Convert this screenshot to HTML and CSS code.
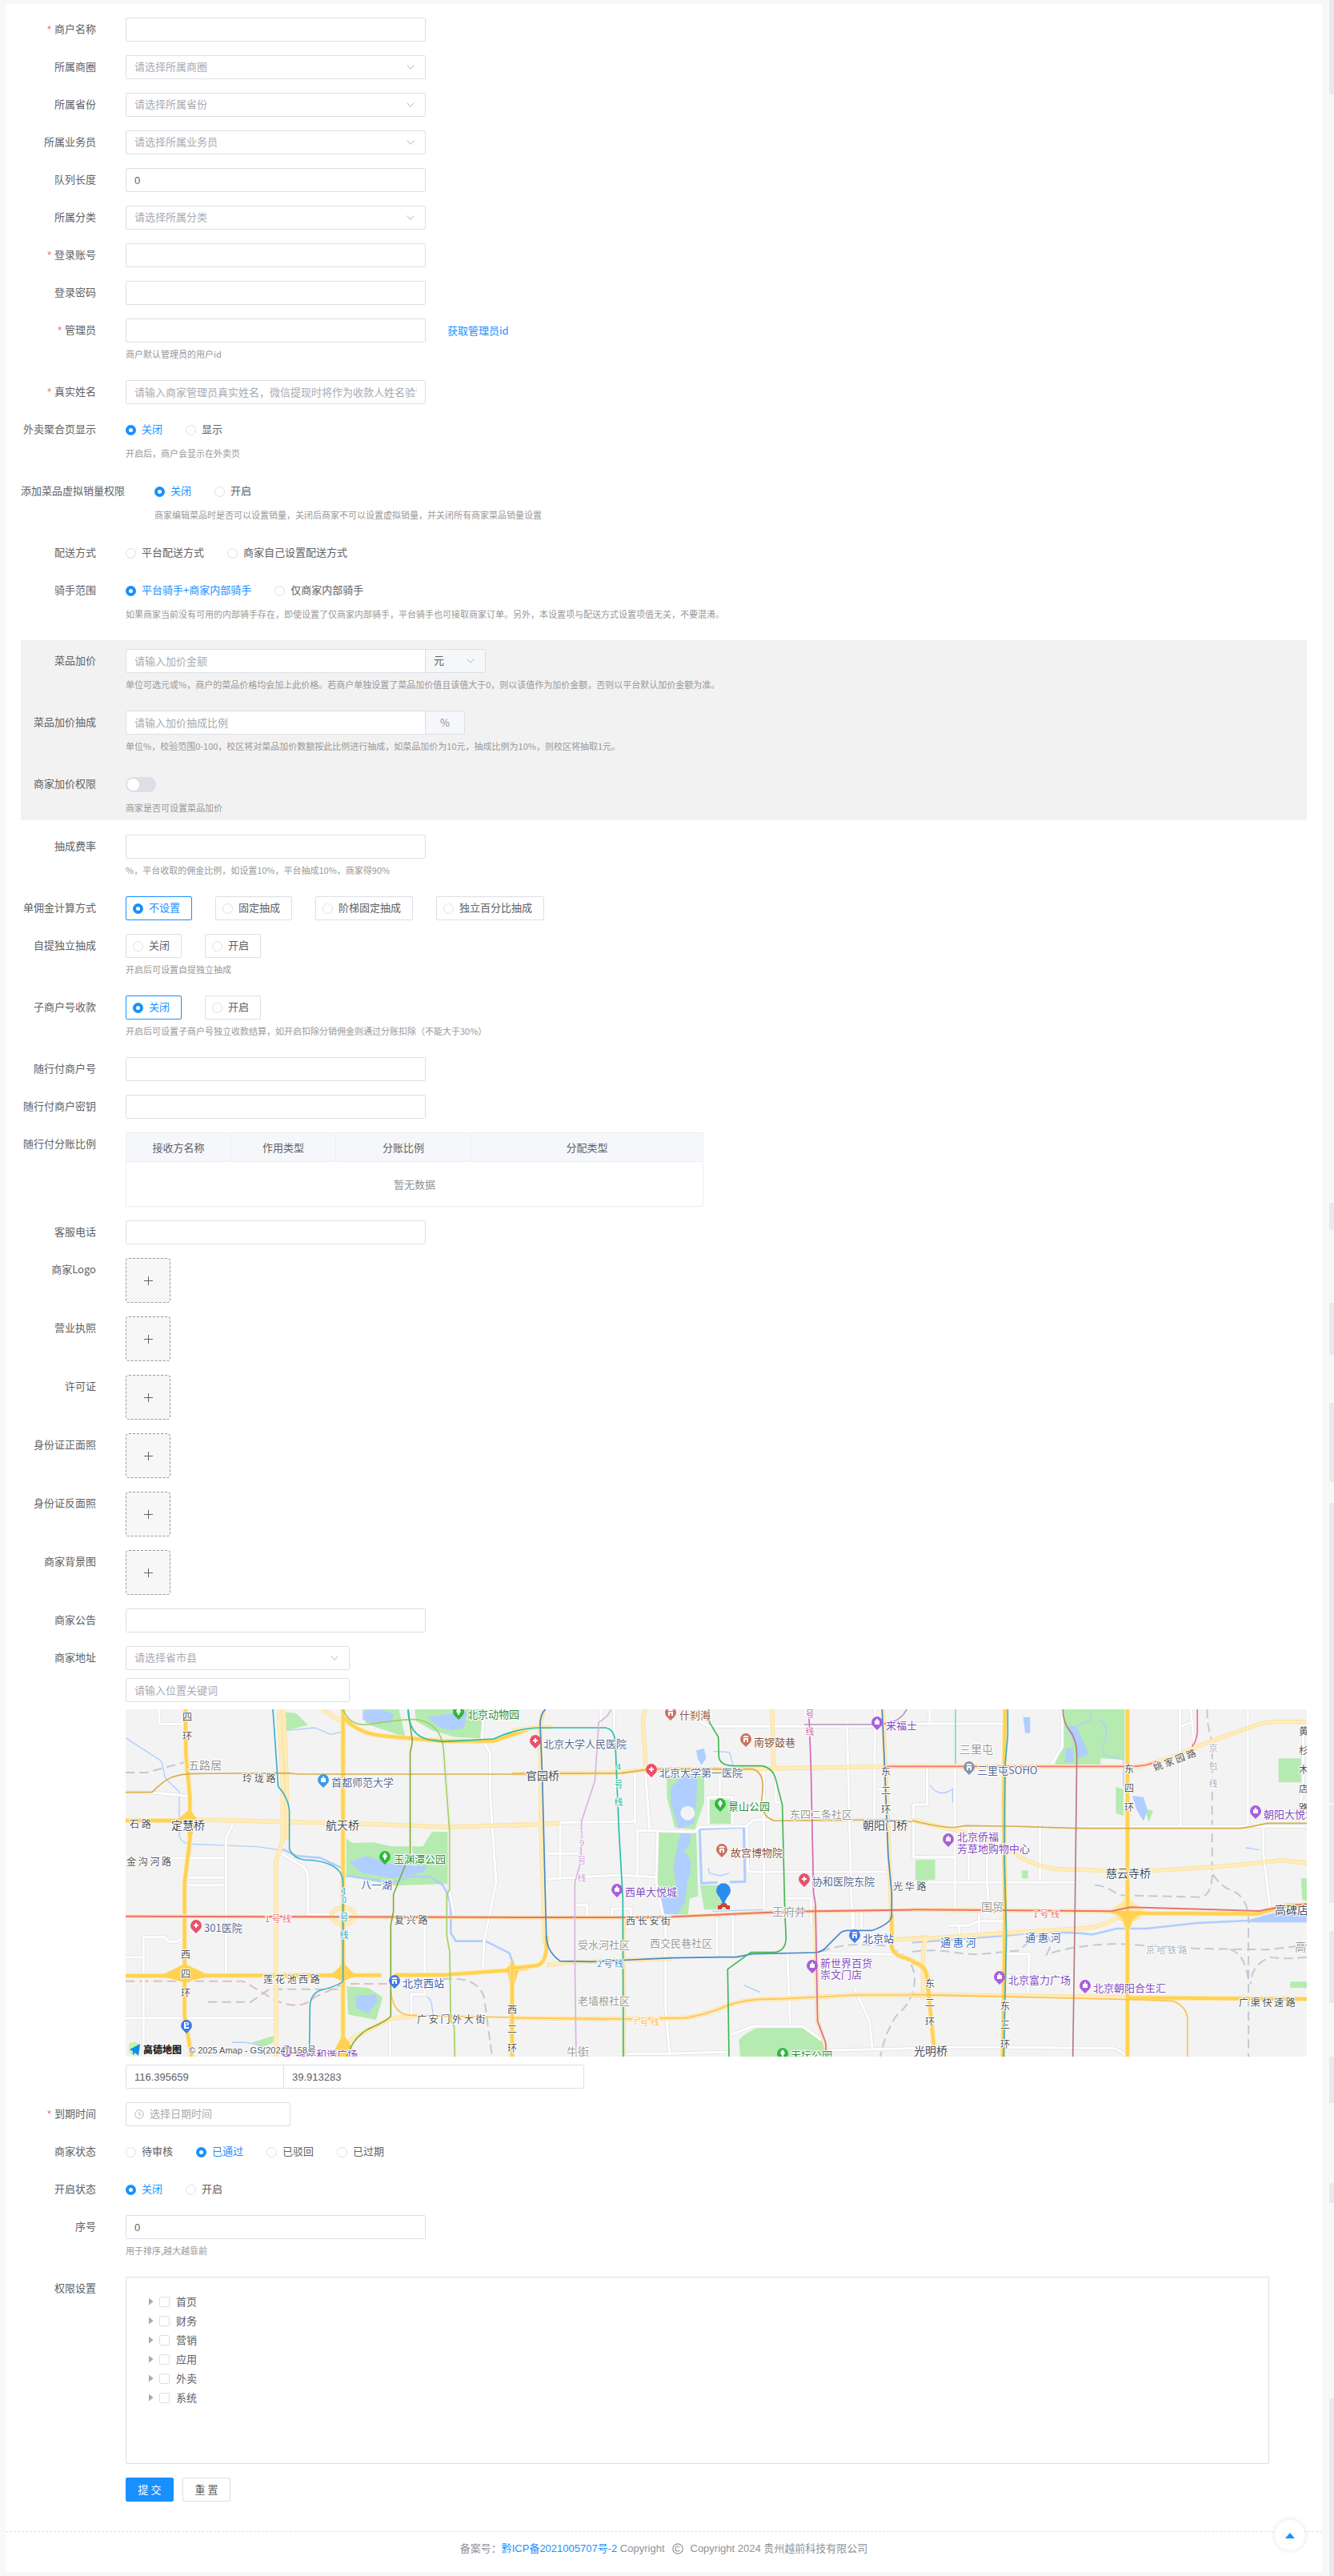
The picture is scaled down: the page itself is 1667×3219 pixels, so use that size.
FILE: index.html
```html
<!DOCTYPE html>
<html lang="zh-CN">
<head>
<meta charset="utf-8">
<title>商户设置</title>
<link rel="stylesheet" href="styles.css">
</head>
<body>
<main class="card">
<form class="form">
  <div class="row"><label class="label required" for="name">商户名称</label><div class="field"><input class="input" id="name" type="text"></div></div>
  <div class="row"><label class="label" for="circle">所属商圈</label><div class="field"><select class="input select" id="circle"><option>请选择所属商圈</option></select></div></div>
  <div class="row"><label class="label" for="province">所属省份</label><div class="field"><select class="input select" id="province"><option>请选择所属省份</option></select></div></div>
  <div class="row"><label class="label" for="sales">所属业务员</label><div class="field"><select class="input select" id="sales"><option>请选择所属业务员</option></select></div></div>
  <div class="row"><label class="label" for="queue">队列长度</label><div class="field"><input class="input" id="queue" type="text" value="0"></div></div>
  <div class="row"><label class="label" for="category">所属分类</label><div class="field"><select class="input select" id="category"><option>请选择所属分类</option></select></div></div>
  <div class="row"><label class="label required" for="account">登录账号</label><div class="field"><input class="input" id="account" type="text"></div></div>
  <div class="row"><label class="label" for="password">登录密码</label><div class="field"><input class="input" id="password" type="password"></div></div>
  <div class="row"><label class="label required" for="admin">管理员</label><div class="field">
    <div class="line"><input class="input" id="admin" type="text"><a class="link" href="#admin">获取管理员id</a></div>
    <p class="help">商户默认管理员的用户id</p></div></div>
  <div class="row"><label class="label required" for="realname">真实姓名</label><div class="field"><input class="input" id="realname" type="text" placeholder="请输入商家管理员真实姓名，微信提现时将作为收款人姓名验证"></div></div>
  <div class="row"><span class="label">外卖聚合页显示</span><div class="field">
    <div class="line"><label class="radio"><input type="radio" name="show" checked><span>关闭</span></label><label class="radio"><input type="radio" name="show"><span>显示</span></label></div>
    <p class="help">开启后，商户会显示在外卖页</p></div></div>
  <div class="row"><span class="label">添加菜品虚拟销量权限</span><div class="field">
    <div class="line"><label class="radio"><input type="radio" name="virtual" checked><span>关闭</span></label><label class="radio"><input type="radio" name="virtual"><span>开启</span></label></div>
    <p class="help">商家编辑菜品时是否可以设置销量，关闭后商家不可以设置虚拟销量，并关闭所有商家菜品销量设置</p></div></div>
  <div class="row"><span class="label">配送方式</span><div class="field">
    <div class="line"><label class="radio"><input type="radio" name="delivery"><span>平台配送方式</span></label><label class="radio"><input type="radio" name="delivery"><span>商家自己设置配送方式</span></label></div></div></div>
  <div class="row"><span class="label">骑手范围</span><div class="field">
    <div class="line"><label class="radio"><input type="radio" name="rider" checked><span>平台骑手+商家内部骑手</span></label><label class="radio"><input type="radio" name="rider"><span>仅商家内部骑手</span></label></div>
    <p class="help">如果商家当前没有可用的内部骑手存在，即使设置了仅商家内部骑手，平台骑手也可接取商家订单。另外，本设置项与配送方式设置项值无关，不要混淆。</p></div></div>

  <section class="panel">
    <div class="row"><label class="label" for="markup">菜品加价</label><div class="field">
      <div class="group"><input class="input" id="markup" type="text" placeholder="请输入加价金额"><select class="input select unit" aria-label="单位"><option>元</option></select></div>
      <p class="help">单位可选元或%，商户的菜品价格均会加上此价格。若商户单独设置了菜品加价值且该值大于0，则以该值作为加价金额，否则以平台默认加价金额为准。</p></div></div>
    <div class="row"><label class="label" for="cut">菜品加价抽成</label><div class="field">
      <div class="group"><input class="input" id="cut" type="text" placeholder="请输入加价抽成比例"><span class="addon">%</span></div>
      <p class="help">单位%，校验范围0-100，校区将对菜品加价数额按此比例进行抽成，如菜品加价为10元，抽成比例为10%，则校区将抽取1元。</p></div></div>
    <div class="row"><label class="label" for="allow">商家加价权限</label><div class="field">
      <div class="line"><input class="switch" id="allow" type="checkbox" role="switch"></div>
      <p class="help">商家是否可设置菜品加价</p></div></div>
  </section>

  <div class="row"><label class="label" for="rate">抽成费率</label><div class="field"><input class="input" id="rate" type="text">
    <p class="help">%，平台收取的佣金比例，如设置10%，平台抽成10%，商家得90%</p></div></div>
  <div class="row"><span class="label">单佣金计算方式</span><div class="field">
    <div class="line"><label class="radio boxed"><input type="radio" name="calc" checked><span>不设置</span></label><label class="radio boxed"><input type="radio" name="calc"><span>固定抽成</span></label><label class="radio boxed"><input type="radio" name="calc"><span>阶梯固定抽成</span></label><label class="radio boxed"><input type="radio" name="calc"><span>独立百分比抽成</span></label></div></div></div>
  <div class="row"><span class="label">自提独立抽成</span><div class="field">
    <div class="line"><label class="radio boxed"><input type="radio" name="pickup"><span>关闭</span></label><label class="radio boxed"><input type="radio" name="pickup"><span>开启</span></label></div>
    <p class="help">开启后可设置自提独立抽成</p></div></div>
  <div class="row"><span class="label">子商户号收款</span><div class="field">
    <div class="line"><label class="radio boxed"><input type="radio" name="sub" checked><span>关闭</span></label><label class="radio boxed"><input type="radio" name="sub"><span>开启</span></label></div>
    <p class="help">开启后可设置子商户号独立收款结算，如开启扣除分销佣金则通过分账扣除（不能大于30%）</p></div></div>
  <div class="row"><label class="label" for="sxf">随行付商户号</label><div class="field"><input class="input" id="sxf" type="text"></div></div>
  <div class="row"><label class="label" for="sxfkey">随行付商户密钥</label><div class="field"><input class="input" id="sxfkey" type="text"></div></div>
  <div class="row"><span class="label">随行付分账比例</span><div class="field">
    <table class="table">
      <colgroup><col class="col-name"><col class="col-kind"><col class="col-ratio"><col></colgroup>
      <thead><tr><th>接收方名称</th><th>作用类型</th><th>分账比例</th><th>分配类型</th></tr></thead>
      <tbody><tr><td colspan="4">暂无数据</td></tr></tbody>
    </table></div></div>
  <div class="row"><label class="label" for="phone">客服电话</label><div class="field"><input class="input" id="phone" type="tel"></div></div>
  <div class="row"><span class="label">商家Logo</span><div class="field"><button class="upload" type="button" aria-label="上传商家Logo"></button></div></div>
  <div class="row"><span class="label">营业执照</span><div class="field"><button class="upload" type="button" aria-label="上传营业执照"></button></div></div>
  <div class="row"><span class="label">许可证</span><div class="field"><button class="upload" type="button" aria-label="上传许可证"></button></div></div>
  <div class="row"><span class="label">身份证正面照</span><div class="field"><button class="upload" type="button" aria-label="上传身份证正面照"></button></div></div>
  <div class="row"><span class="label">身份证反面照</span><div class="field"><button class="upload" type="button" aria-label="上传身份证反面照"></button></div></div>
  <div class="row"><span class="label">商家背景图</span><div class="field"><button class="upload" type="button" aria-label="上传商家背景图"></button></div></div>
  <div class="row"><label class="label" for="notice">商家公告</label><div class="field"><input class="input" id="notice" type="text"></div></div>
  <div class="row"><label class="label" for="region">商家地址</label><div class="field address">
    <select class="input select medium" id="region"><option>请选择省市县</option></select>
    <input class="input medium" type="text" placeholder="请输入位置关键词" aria-label="位置关键词">
    <svg class="map" viewBox="0 0 1476 434" preserveAspectRatio="xMidYMid slice" role="img" aria-label="地图">
      <defs>
        <path id="w-minor" d="M177 50V106H265M51 362Q200 362 285 378M450 475V490L427 530V1040M220 608H420M285 682H420M285 710H420M51 980H118M118 1353V905H198L212 922H245L262 910M51 1208H612M635 592L715 640Q735 655 735 690V820H820M1172 850V1120H1122V1195M1395 50L1388 160L1418 215V380L1440 700L1395 920L1390 1030M1043 1200V1353M1265 730L1282 820M1120 170V600M1243 180L1265 500V730"/>
        <path id="w-pale" d="M625 50L640 330V540L615 620V1353M643 50L655 320V540M310 465L470 468L870 478L1265 492L1560 483M1145 1200L1043 1210L900 1285L870 1320M822 825A45 30 0 1 1 912 825A45 30 0 1 1 822 825M866 100Q800 60 790 50M1498 1170V1240"/>
        <path id="w-high" d="M275 50L277 220L292 380V540L272 700V1200L298 1353M866 50V1353M51 468H290M51 1050L1010 1048M1060 1048L1250 1046L1500 1028L1560 1020M1498 1010V1353M866 80Q920 140 1010 150L1240 170H1430L1560 126"/>
        <path id="c-minor" d="M333 50V90L322 130M383 50V150M460 290V480M470 500V675M180 475L465 472M180 480V685M130 592H250M130 688L400 672L540 680M500 290L515 500M470 505L685 510L700 492L880 488L905 465H1400M545 507L540 700L575 870V1170L590 1340M400 1342H590L810 1335M680 80L735 115H1360M778 260V375M735 480V380H826V480M943 280L945 800M880 490L885 660H1400M1255 100L1275 870M1360 50L1358 460M988 290V400H1010M768 830V975M828 830V980M1025 760H1120V850M1032 960L1042 1230M818 1272L900 1240H1090L1160 1290M1145 965L1430 970M1285 1100L1340 1220L1350 1320M1180 1330L1560 1320M1560 410H1502V605H1560M1430 105H1560M238 785H280V830M375 830V798H445V868H415M1280 800V870M1310 810V870M1370 350H1400"/>
        <path id="c-pale" d="M118 50L105 110L108 500L122 930M0 487L180 477M500 50L490 90L503 290M0 293L400 288L520 275H870L1400 265H1560M975 50L980 268M130 1010Q200 997 300 997L600 985M0 1208L420 1212L650 1208Q730 1195 800 1165Q870 1135 1000 1137L1290 1122H1560M418 830V1353M1135 790L1145 1220L1180 1330M1390 50L1410 500L1425 900M1430 915L1560 905M0 130L110 118H150"/>
        <path id="c-high" d="M128 900Q135 1005 90 1012L0 1022M1423 820V940Q1430 975 1480 985Q1550 1010 1560 1060M0 1000V1353"/>
        <path id="e-minor" d="M65 50V105M0 105H340M55 270V408H5V605H158M158 50V800M558 50V190L520 255M475 495V690M0 700H605M210 500V690M278 590V700L283 770M135 862H210L248 845H340M175 865V895M248 815V890M350 968H435L430 1115M350 1050H595M430 1085H350M80 1318H300L750 1322Q780 1330 790 1350M995 50L997 490M1000 115L1035 100M1035 50L1050 190M1247 50V490M1305 490V590L1330 790M1453 110V350L1430 470M650 490H1460"/>
        <path id="e-pale" d="M0 465Q130 500 170 505L380 590Q450 640 540 650L720 655H900Q1200 640 1370 617L1467 627M0 915L340 890L640 872Q720 865 780 820M40 1140V960Q40 920 60 910M0 265H830Q900 260 1060 190L1250 120Q1310 98 1350 98H1467M0 1120L800 1130M345 760V850M0 802L740 808M800 760V880"/>
        <path id="e-high" d="M345 50L340 400L345 800L337 1353M800 50V1353M0 1000Q50 1005 55 1060L80 1310M740 810L820 815L1280 818L1400 785H1467M800 1132L1467 1137"/>
        <path id="pin" d="M0 10L-5 5A7 7 0 1 1 5 5Z"/>
        <path id="cross" d="M-3 -1H-1V-3H1V-1H3V1H1V3H-1V1H-3Z"/>
        <path id="bag" d="M-3 -2H3V3H-3ZM-1 -2V-4H1V-2"/>
        <path id="tree" d="M0 -5Q5 0 1 2V4H-1V2Q-5 0 0 -5Z"/>
        <path id="hall" d="M-4 -2L-2 -4H2L4 -2ZM-3 -1H3V4H1V1H-1V4H-3Z"/>
        <path id="parking" d="M-3 -4H1Q3 -4 3 -2T1 0H-1V2H3V4H-3ZM-1 -3V-1H1V-3Z"/>
      </defs>
      <rect class="land" width="1476" height="434"/>
      <g transform="translate(-17 -17) scale(.3333)">
        <path class="park" d="M650 62L690 65L735 110L655 130ZM940 50H1075L1100 155L950 105ZM1135 50H1390L1380 160L1285 155L1200 130L1140 95ZM878 535L900 552L980 550L1050 565H1165L1200 510H1258V705L1060 712L900 680H878ZM880 1090L960 1095L1015 1130L990 1215L885 1195ZM525 1300L605 1275V1300L560 1320Z"/>
        <path class="water" d="M940 60Q1000 40 1055 70L1050 100L980 105L940 90ZM1180 80L1250 70L1330 60L1320 120L1270 130L1220 115ZM890 625L950 600L1040 630L1180 640L1170 660L1060 685L940 665ZM915 1125L990 1120L995 1150L960 1190L915 1170Z"/>
        <path class="river" d="M51 158L185 245L200 310L252 360V520Q255 555 300 556L545 566L640 580M655 130L760 120L820 145L860 135M450 1300H500L560 1310M1180 1130Q1200 1130 1203 1200"/>
        <path class="river wide" d="M640 575L690 600L780 608L870 650M878 675L1060 700L1110 678H1190L1240 710Q1270 760 1270 800V890L1290 920H1400L1490 965L1505 1010"/>
        <path class="rail" d="M51 288H130L270 250M360 1148H520L590 1100H860M1240 1062Q1370 1050 1395 1130L1425 1353"/>
        <path class="rail pink" d="M51 1070H490L560 1110Q690 1200 760 1130L870 1080H1040"/>
        <use href="#w-minor" class="edge"/><use href="#w-minor" class="minor"/>
        <use href="#w-pale" class="pale-edge"/><use href="#w-pale" class="pale"/>
        <use href="#w-high" class="high-edge"/><use href="#w-high" class="high"/>
        <path class="junction" d="M292 425L235 472L275 485L292 545L320 465ZM180 1050L272 1005L370 1050L272 1075ZM815 1050L850 1020L866 1000L885 1020L915 1050L866 1070ZM866 1270L820 1353H915L890 1300ZM1480 1020L1505 995L1525 1030L1510 1080L1490 1070Z"/>
        <path class="avenue" d="M51 827L1560 831"/>
        <path class="metro gold" d="M51 362H150Q190 320 225 305Q260 292 320 292L660 290L700 294H1560"/>
        <path class="metro cyan" d="M603 50L623 340Q660 380 665 430V575Q680 610 720 615Q866 620 866 700V1070Q855 1085 780 1105Q742 1120 742 1170L740 1325"/>
        <path class="metro red" d="M51 827L1560 831"/>
        <path class="metro orange" d="M1045 1100Q1050 1195 1120 1198L1560 1207"/>
        <path class="metro olive" d="M1110 50L1126 170L1118 215V590L1055 745V810L1045 860V1200Q1040 1215 960 1250Q905 1280 880 1353"/>
        <path class="metro lime" d="M866 50Q890 115 960 108Q1100 85 1150 90Q1235 110 1243 200L1265 500V730L1255 745V900L1266 960L1270 1220L1283 1240L1285 1353"/>
        <path class="metro teal" d="M1110 50Q1110 150 1190 165L1240 172L1430 162Q1500 130 1560 125"/>
      </g>
      <g transform="translate(483 -17) scale(.3333)">
        <path class="park" d="M580 310L720 290V400L685 500L610 495L580 380ZM740 390H825V480H742ZM545 510H690L697 752L665 760L660 820H560L545 700ZM705 710H775L810 800L720 802ZM1512 615H1560V695H1515ZM850 1290Q900 1240 960 1242H1090Q1160 1265 1180 1340V1353H855Z"/>
        <path class="water" d="M690 205L720 198L727 235L710 260L695 235ZM595 345L650 290L695 300L690 400L680 480L625 498L595 400ZM630 515L670 515L665 560L645 580L665 610Q680 640 655 700L650 770L620 820L565 815L552 740L620 745L605 640Z"/>
        <circle class="land" cx="658" cy="440" r="27"/>
        <path class="river moat" d="M770 700L710 703L703 500L868 493L873 697L815 699"/>
        <path class="river" d="M735 645L740 665L780 675L815 665M755 208L815 212L828 260M750 808L940 802M870 1085L930 1112"/>
        <path class="rail" d="M1160 960Q1250 920 1400 938Q1520 980 1508 1080Q1500 1150 1440 1200Q1400 1260 1380 1353"/>
        <use href="#c-minor" class="edge"/><use href="#c-minor" class="minor"/>
        <use href="#c-pale" class="pale-edge"/><use href="#c-pale" class="pale"/>
        <use href="#c-high" class="high-edge"/><use href="#c-high" class="high"/>
        <path class="avenue" d="M0 831H420L600 829L945 813L1140 808L1560 802"/>
        <path class="metro red" d="M0 831H420L600 829L945 813L1140 808L1560 802"/>
        <path class="metro orange" d="M0 1208L420 1212L650 1208Q730 1195 800 1165Q870 1135 1000 1137L1290 1122H1560"/>
        <path class="metro gold" d="M0 293L410 290L520 275H900Q940 285 940 340L935 400Q940 460 985 468L1400 465Q1500 468 1560 485"/>
        <path class="metro blue" d="M125 50Q105 70 105 110L113 300L128 900Q130 960 180 995L300 997L600 983L780 980H840L900 968L1140 963Q1165 960 1185 935L1230 890Q1240 880 1260 880H1350Q1420 855 1423 825V740L1410 600L1398 300L1387 50"/>
        <path class="metro teal" d="M0 135Q60 120 110 120H350Q385 125 387 180L400 500L415 760L417 1353"/>
        <path class="metro lilac" d="M370 50Q365 75 325 100L310 320L260 470L258 620L235 700V1000L240 1353"/>
        <path class="metro green" d="M737 50L740 100L773 155L775 230Q780 262 830 263H935Q980 270 990 320L1013 410L1022 800L1027 910Q1025 960 980 962H895L808 1025L813 1353"/>
        <path class="metro magenta" d="M1112 50L1120 260L1130 740L1137 780L1145 1220L1175 1300L1177 1335"/>
        <path class="metro rose" d="M1400 265H1560"/>
        <path class="metro violet" d="M1095 108H1380L1420 100Q1460 90 1480 50"/>
      </g>
      <g transform="translate(983 -17) scale(.3361 .3333)">
        <path class="park" d="M565 50H790V240L700 235V258H530L558 190ZM757 342L785 350V450L757 440ZM1362 235H1445V325H1362ZM12 615H85V690H12ZM408 655H430V685H408ZM865 425L895 430L880 475ZM1445 685H1467V770L1450 765ZM1405 1072H1467V1095H1405Z"/>
        <path class="water" d="M412 80H438V140H420ZM570 115H610L640 180L655 220L620 235L600 170ZM570 200L600 195V250H568ZM818 375L860 380L875 430L860 470L835 430ZM1250 840L1340 815H1467V850H1250Z"/>
        <path class="river" d="M65 335Q100 385 150 350V400M665 50V90L610 115M690 90Q730 100 720 150Q690 230 740 228L785 240V340M1240 570L1290 578"/>
        <path class="river wide" d="M0 925L340 900L480 885L620 890L670 895L760 873H870L1060 852L1250 843"/>
        <path class="rail" d="M1097 50V95L1115 180V680Q1110 750 1070 755L770 748Q700 700 665 713M1118 670Q1150 720 1190 730Q1250 760 1250 840V1353M0 960Q80 950 140 960T240 970L400 955Q450 900 490 890Q530 920 500 970Q600 935 760 930L1060 948L1320 952L1467 935M1180 950Q1240 970 1250 1070M1467 980Q1380 990 1330 980Q1260 1010 1258 1080"/>
        <use href="#e-minor" class="edge"/><use href="#e-minor" class="minor"/>
        <use href="#e-pale" class="pale-edge"/><use href="#e-pale" class="pale"/>
        <path class="pale-fill" d="M740 800L785 770L800 720L815 770L880 812L820 850L800 900L780 850Z"/>
        <use href="#e-high" class="high-edge"/><use href="#e-high" class="high"/>
        <path class="junction" d="M750 808H860L820 840L808 870H795L780 835Z"/>
        <path class="metro mint" d="M160 50V255"/>
        <path class="metro rose" d="M0 265H820Q880 262 910 245M1060 50V140Q1055 175 1040 190"/>
        <path class="metro gold" d="M0 468Q130 500 165 492L200 487L400 490L610 497H1220Q1270 490 1320 478H1467"/>
        <path class="metro red" d="M0 802L740 808L810 793L1290 807L1350 795L1467 780"/>
        <path class="metro orange" d="M0 1120L850 1140L970 1145Q1020 1165 1023 1210V1353"/>
        <path class="metro cyan" d="M355 50V150L345 260L342 600L350 900L340 1353"/>
        <path class="metro brown" d="M560 50Q560 100 585 130Q610 160 612 220L605 800L597 1353"/>
      </g>
      <g class="road-name">
        <text x="146" y="85">玲 珑 路</text><text x="5" y="142">石 路</text><text x="1" y="189">金 沟 河 路</text><text x="336" y="262">复 兴 路</text><text x="172" y="336">莲 花 池 西 路</text><text x="364" y="386">广 安 门 外 大 街</text><text x="959" y="220">光 华 路</text><text x="625" y="263">西 长 安 街</text><text x="1391" y="365">广 渠 快 速 路</text>
        <text transform="translate(1284 72) rotate(-20)">姚 家 园 路</text>
      </g>
      <g class="road-name upright">
        <text x="77" y="3">四 环</text><text x="75" y="300">西 四 环</text><text x="483" y="369">西 二 环</text><text x="950" y="71">东 二 环</text><text x="1254" y="68">东 四 环</text><text x="1472" y="21">黄 杉 木 店 路</text><text x="1005" y="336">东 二 环</text><text x="1099" y="364">东 三 环</text>
      </g>
      <g class="bridge">
        <text x="57" y="144">定慧桥</text><text x="250" y="144">航天桥</text><text x="500" y="82">官园桥</text><text x="921" y="144">朝阳门桥</text><text x="985" y="426">光明桥</text><text x="1225" y="204">慈云寺桥</text><text x="1436" y="250">高碑店</text>
      </g>
      <g class="area large">
        <text x="78" y="69">五路居</text><text x="808" y="252">王府井</text><text x="551" y="427">牛街</text><text x="1042" y="49">三里屯</text><text x="1069" y="246">国贸</text><text x="1461" y="296">高</text>
      </g>
      <g class="area">
        <text x="830" y="130">东四二条社区</text><text x="565" y="293">受水河社区</text><text x="655" y="291">西交民巷社区</text><text x="565" y="363">老墙根社区</text>
      </g>
      <g class="line-name">
        <text class="t-red" x="174" y="261">1 号 线</text><text class="t-blue" x="589" y="317">2 号 线</text><text class="t-orange" x="634" y="390">7 号 线</text><text class="t-red" x="1134" y="255">1 号 线</text><text class="t-rail" x="1275" y="300">京 哈 铁 路</text>
      </g>
      <g class="line-name upright">
        <text class="t-cyan" x="273" y="221">10 号 线</text><text class="t-teal" x="616" y="66">4 号 线</text><text class="t-lilac" x="570" y="150">19 号 线</text><text class="t-magenta" x="855" y="0">号 线</text><text class="t-rail" x="1359" y="43">京 包 线</text>
      </g>
      <g class="river-name"><text x="294" y="218">八一湖</text><text x="1018" y="290">通 惠 河</text><text x="1124" y="284">通 惠 河</text></g>
      <g class="poi school"><use href="#pin" x="247" y="88"/><use href="#bag" class="glyph" x="247" y="88"/><text x="257" y="90">首都师范大学</text></g>
      <g class="poi medical">
        <use href="#pin" x="88" y="270"/><use href="#cross" class="glyph" x="88" y="270"/><text x="98" y="272">301医院</text>
        <use href="#pin" x="512" y="39"/><use href="#cross" class="glyph" x="512" y="39"/><text x="522" y="42">北京大学人民医院</text>
        <use href="#pin" x="657" y="75"/><use href="#cross" class="glyph" x="657" y="75"/><text x="667" y="78">北京大学第一医院</text>
        <use href="#pin" x="848" y="212"/><use href="#cross" class="glyph" x="848" y="212"/><text x="858" y="214">协和医院东院</text>
      </g>
      <g class="poi garden">
        <use href="#pin" x="324" y="184"/><use href="#tree" class="glyph" x="324" y="184"/><text x="335" y="186">玉渊潭公园</text>
        <use href="#pin" x="416" y="3"/><use href="#tree" class="glyph" x="416" y="3"/><text x="427" y="5">北京动物园</text>
        <use href="#pin" x="743" y="118"/><use href="#tree" class="glyph" x="743" y="118"/><text x="753" y="120">景山公园</text>
        <use href="#pin" x="821" y="430"/><use href="#tree" class="glyph" x="821" y="430"/><text x="831" y="431">天坛公园</text>
      </g>
      <g class="poi sight">
        <use href="#pin" x="681" y="4"/><use href="#hall" class="glyph" x="681" y="4"/><text x="692" y="6">什刹海</text>
        <use href="#pin" x="775" y="37"/><use href="#hall" class="glyph" x="775" y="37"/><text x="785" y="40">南锣鼓巷</text>
        <use href="#pin" x="745" y="175"/><use href="#hall" class="glyph" x="745" y="175"/><text x="756" y="178">故宫博物院</text>
      </g>
      <g class="poi station">
        <use href="#pin" x="336" y="339"/><use href="#hall" class="glyph" x="336" y="339"/><text x="346" y="341">北京西站</text>
        <use href="#pin" x="911" y="282"/><use href="#hall" class="glyph" x="911" y="282"/><text x="921" y="285">北京站</text>
        <use href="#pin" x="76" y="395"/><use href="#parking" class="glyph" x="76" y="395"/>
      </g>
      <g class="poi office"><use href="#pin" x="1054" y="72"/><use href="#hall" class="glyph" x="1054" y="72"/><text x="1064" y="75">三里屯SOHO</text></g>
      <g class="poi mall">
        <use href="#pin" x="201" y="427"/><use href="#bag" class="glyph" x="201" y="427"/><text x="212" y="430">银座和谐广场</text>
        <use href="#pin" x="614" y="225"/><use href="#bag" class="glyph" x="614" y="225"/><text x="624" y="227">西单大悦城</text>
        <use href="#pin" x="858" y="320"/><use href="#bag" class="glyph" x="858" y="320"/><text x="868" y="316">新世界百货</text><text x="868" y="330">崇文门店</text>
        <use href="#pin" x="939" y="16"/><use href="#bag" class="glyph" x="939" y="16"/><text x="950" y="19">来福士</text>
        <use href="#pin" x="1412" y="127"/><use href="#bag" class="glyph" x="1412" y="127"/><text x="1422" y="130">朝阳大悦城</text>
        <use href="#pin" x="1028" y="162"/><use href="#bag" class="glyph" x="1028" y="162"/><text x="1039" y="158">北京侨福</text><text x="1039" y="173">芳草地购物中心</text>
        <use href="#pin" x="1092" y="334"/><use href="#bag" class="glyph" x="1092" y="334"/><text x="1103" y="337">北京富力广场</text>
        <use href="#pin" x="1199" y="345"/><use href="#bag" class="glyph" x="1199" y="345"/><text x="1209" y="347">北京朝阳合生汇</text>
      </g>
      <path class="gate" d="M740 250V245H743L745 242H750L752 245H755V250H751L749 247H746L744 250Z"/>
      <path class="marker" d="M747 246Q745 238 740 232A9 9 0 1 1 754 232Q749 238 747 246Z"/>
      <path class="logo-leaf" d="M4 418Q12 412 18 420L16 432Q8 434 4 428Z"/><path class="logo-arrow" d="M5 425L18 418L16 433L12 429L9 432V427Z"/>
      <text class="logo-name" x="22" y="424">高德地图</text>
      <text class="copy" x="79" y="426">© 2025 Amap - GS(2024)1158号</text>
    </svg>
    <div class="group coords"><input class="input lng" type="text" value="116.395659" aria-label="经度"><input class="input" type="text" value="39.913283" aria-label="纬度"></div>
  </div></div>
  <div class="row"><label class="label required" for="expire">到期时间</label><div class="field"><div class="date">
    <svg viewBox="0 0 12 12"><circle cx="6" cy="6" r="5.2"/><path d="M6 3V6.5H8.5"/></svg><input class="input" id="expire" type="text" placeholder="选择日期时间"></div></div></div>
  <div class="row"><span class="label">商家状态</span><div class="field"><div class="line"><label class="radio"><input type="radio" name="status"><span>待审核</span></label><label class="radio"><input type="radio" name="status" checked><span>已通过</span></label><label class="radio"><input type="radio" name="status"><span>已驳回</span></label><label class="radio"><input type="radio" name="status"><span>已过期</span></label></div></div></div>
  <div class="row"><span class="label">开启状态</span><div class="field"><div class="line"><label class="radio"><input type="radio" name="open" checked><span>关闭</span></label><label class="radio"><input type="radio" name="open"><span>开启</span></label></div></div></div>
  <div class="row"><label class="label" for="sort">序号</label><div class="field"><input class="input" id="sort" type="text" value="0"><p class="help">用于排序,越大越靠前</p></div></div>
  <div class="row"><span class="label">权限设置</span><div class="field">
    <ul class="tree">
      <li><button type="button" aria-label="展开首页"></button><label><input type="checkbox">首页</label></li>
      <li><button type="button" aria-label="展开财务"></button><label><input type="checkbox">财务</label></li>
      <li><button type="button" aria-label="展开营销"></button><label><input type="checkbox">营销</label></li>
      <li><button type="button" aria-label="展开应用"></button><label><input type="checkbox">应用</label></li>
      <li><button type="button" aria-label="展开外卖"></button><label><input type="checkbox">外卖</label></li>
      <li><button type="button" aria-label="展开系统"></button><label><input type="checkbox">系统</label></li>
    </ul></div></div>
  <div class="row"><span class="label"></span><div class="field actions"><button class="btn primary" type="submit">提 交</button><button class="btn" type="reset">重 置</button></div></div>
</form>
<footer class="footer"><span>备案号：<a href="#beian">黔ICP备2021005707号-2</a> Copyright</span><svg viewBox="0 0 14 14"><circle cx="7" cy="7" r="6.2"/><path d="M9.3 5.2A3 3 0 1 0 9.3 8.8"/></svg><span>Copyright 2024 贵州越前科技有限公司</span></footer>
</main>
<button class="backtop" type="button" aria-label="回到顶部"><svg viewBox="0 0 12 7"><path d="M6 0L12 7H0Z"/></svg></button>
<svg class="rail-thumbs" viewBox="0 0 6 3219" preserveAspectRatio="none" aria-hidden="true">
  <path d="M0 0H6V118H3Q0 118 0 115ZM0 1503H6V1537H3Q0 1537 0 1534ZM0 1628H6V1693H3Q0 1693 0 1690ZM0 1753H6V1852H3Q0 1852 0 1849ZM0 1878H6V2253H0ZM6 2255V2378H0V2258Q0 2255 3 2255ZM6 2413V2503H0V2416Q0 2413 3 2413ZM6 2570V2628H0V2573Q0 2570 3 2570ZM6 2728V2753H0V2731Q0 2728 3 2728ZM6 2997V3219H0V3000Q0 2997 3 2997Z"/>
</svg>
</body>
</html>
```
FILE: styles.css
```css
* { box-sizing: border-box; }
body {
  margin: 0;
  padding: 5px 15px 5px 7px;
  position: relative;
  background: #f6f8fa;
  color: #606266;
  font: 13px/30px "Noto Sans CJK SC", sans-serif;
}
.card { background: #fff; }
.form { padding: 17px 19px 2px; }
.row { display: flex; margin-bottom: 17px; }
.label {
  flex: none;
  min-width: 94px;
  margin-right: 37px;
  height: 30px;
  line-height: 28px;
  text-align: right;
}
.required::before { content: "*"; color: #f56c6c; margin-right: 4px; font-family: "Liberation Sans", sans-serif; }
.field { flex: 1; min-width: 0; }
.line, .group { display: flex; align-items: center; height: 30px; }

.input {
  display: block;
  width: 375px;
  max-width: 100%;
  height: 30px;
  padding: 0 10px;
  border: 1px solid #dcdfe6;
  border-radius: 2px;
  background: #fff;
  color: #606266;
  font: 13px/28px "Liberation Sans", "Noto Sans CJK SC", sans-serif;
  outline: 0;
}
.input::placeholder { color: #a8abb2; opacity: 1; }
.select {
  appearance: none;
  color: #a8abb2;
  background: #fff url("data:image/svg+xml,%3Csvg xmlns='http://www.w3.org/2000/svg' width='10' height='6'%3E%3Cpath d='M.7.5 5 5.3 9.3.5' fill='none' stroke='%23b4b8c0'/%3E%3C/svg%3E") no-repeat right 13px center;
}
.medium { width: 280px; }
.group .input:first-child { border-radius: 2px 0 0 2px; }
.group > :last-child { border-left: 0; border-radius: 0 2px 2px 0; }
.unit { width: 75px; color: #606266; background-color: #f5f7fa; }
.addon { width: 49px; height: 30px; border: 1px solid #dcdfe6; background: #f5f7fa; color: #909399; text-align: center; line-height: 28px; }
.lng { width: 198px; }

.help { margin: 0 0 2px; font-size: 11px; line-height: 28px; color: #999; }
.link { margin-left: 27px; }
a { color: #1890ff; text-decoration: none; }

.radio { display: flex; align-items: center; margin-right: 29px; }
.radio input {
  appearance: none;
  flex: none;
  width: 13px;
  height: 13px;
  margin: 0 7px 0 0;
  border: 1px solid #dcdfe6;
  border-radius: 50%;
  background: #fff;
}
.radio input:checked { border: 4px solid #1890ff; }
.radio input:checked + span { color: #1890ff; }
.radio span { line-height: 26px; margin-bottom: 2px; }
.boxed { height: 30px; padding: 0 14px 0 8px; border: 1px solid #dcdfe6; border-radius: 2px; }
.boxed:has(:checked) { border-color: #1890ff; }

.panel { margin-bottom: 18px; padding-top: 11px; background: #f2f2f2; }
.panel .row:last-child { margin-bottom: 0; }
.switch { appearance: none; width: 38px; height: 19px; margin: 0; border-radius: 10px; background: #dcdfe6; padding: 2px; }
.switch::before { content: ""; display: block; width: 15px; height: 15px; border-radius: 50%; background: #fff; }

.table { width: 722px; max-width: 100%; table-layout: fixed; border-collapse: collapse; text-align: center; }
.col-name, .col-kind { width: 131px; }
.col-ratio { width: 169px; }
.table th { height: 36px; padding: 0; background: #f5f7fa; border: 1px solid #ebeef5; font-weight: 400; line-height: 20px; }
.table td { height: 56px; padding: 0; border: 1px solid #ebeef5; color: #909399; }

.upload {
  display: block;
  width: 56px;
  height: 56px;
  border: 1px dashed #999;
  border-radius: 4px;
  background:
    linear-gradient(#606266, #606266) center / 11px 1px no-repeat,
    linear-gradient(#606266, #606266) center / 1px 11px no-repeat,
    #f7f7f7;
}

.address { display: grid; }
.map { display: block; width: 100%; height: 434px; margin: 9px 0 10px; overflow: hidden; }
.address .medium + .medium { margin-top: 10px; }
.land { fill: #f3f3f3; }
.park { fill: #b5ebb0; }
.water { fill: #b0ceff; }
.river { fill: none; stroke: #b0ceff; stroke-width: 4; }
.wide { stroke-width: 8; }
.moat { stroke-width: 9; }
.rail { fill: none; stroke: #c3c9d2; stroke-width: 6; stroke-dasharray: 34 18; }
.rail.pink { stroke: #e4bcc4; }
.edge, .minor, .pale, .pale-edge, .high, .high-edge { fill: none; stroke-linejoin: round; }
.edge { stroke: #dfdfdf; stroke-width: 13; }
.minor { stroke: #fff; stroke-width: 9; }
.pale-edge { stroke: #fadf9c; stroke-width: 16; }
.pale { stroke: #ffecb8; stroke-width: 12; }
.pale-fill { fill: #ffe6a3; }
.high-edge { stroke: #ffe6a3; stroke-width: 18; }
.high { stroke: #ffd251; stroke-width: 12; }
.junction { fill: #ffd251; }
.avenue { fill: none; stroke: #ffdca0; stroke-width: 13; }
.metro { fill: none; stroke-width: 5; stroke-linejoin: round; }
.gold { stroke: #d9ae4c; }
.cyan { stroke: #3fb0c8; }
.red { stroke: #e8756f; stroke-width: 6; }
.orange { stroke: #ffc254; }
.olive { stroke: #86ab38; }
.lime { stroke: #a3cf62; }
.teal { stroke: #26bfa6; }
.blue { stroke: #4788c8; }
.lilac { stroke: #d9b4dd; }
.green { stroke: #43b754; }
.magenta { stroke: #d566b4; }
.rose { stroke: #f0708a; }
.violet { stroke: #b793c8; }
.mint { stroke: #80d3c6; }
.brown { stroke: #b97a80; }

.map text {
  font: 13px "Noto Sans CJK SC", sans-serif;
  dominant-baseline: central;
  paint-order: stroke;
  stroke: #fff;
  stroke-width: 2px;
  stroke-linejoin: round;
}
.map .upright text { writing-mode: vertical-rl; text-orientation: upright; }
.map .road-name text { font-size: 12px; fill: #555; }
.map .bridge text { font-size: 14px; fill: #444c5c; }
.map .area text { fill: #999; }
.map .large text { font-size: 14px; }
.map .line-name text { font-size: 11px; }
.map .river-name text { font-size: 13px; fill: #3568b8; }
.t-red { fill: #e8706f; }
.t-blue { fill: #4788c8; }
.t-orange { fill: #ffb640; }
.t-rail { fill: #a5afbd; }
.t-cyan { fill: #2fa9c4; }
.t-teal { fill: #16b89e; }
.t-lilac { fill: #cfa0d4; }
.t-magenta { fill: #cf5fae; }
.map .glyph { fill: #fff; }
.school { fill: #3a9bea; }
.medical { fill: #e9506c; }
.garden { fill: #2fb83c; }
.sight { fill: #cb7262; }
.station { fill: #4379e8; }
.office { fill: #8796a8; }
.mall { fill: #a95fdb; }
.school text, .medical text, .office text { fill: #566a92; }
.garden text { fill: #2f8f3c; }
.sight text { fill: #8c5540; }
.station text { fill: #2f5bb0; }
.mall text { fill: #7f4cc0; }
.gate { fill: #e2352f; }
.marker { fill: #2b8cf0; }
.logo-leaf { fill: #c9f2a5; }
.logo-arrow { fill: #0c8cf5; }
.map .logo-name { font-size: 12px; font-weight: 900; fill: #222; }
.map .copy { font: 11px "Liberation Sans", "Noto Sans CJK SC", sans-serif; fill: #555; }

.date { display: flex; align-items: center; width: 206px; height: 30px; padding-left: 10px; border: 1px solid #dcdfe6; border-radius: 2px; }
.date svg { flex: none; width: 12px; fill: none; stroke: #b4b8c0; }
.date .input { flex: 1; min-width: 0; height: 28px; padding: 0 7px; border: 0; }

.tree { width: calc(100% - 47px); min-height: 234px; margin: 0; padding: 18px 24px; border: 1px solid #dcdfe6; border-radius: 2px; list-style: none; }
.tree li { display: flex; align-items: center; height: 24px; }
.tree button {
  width: 13px;
  height: 13px;
  margin-right: 4px;
  padding: 0;
  border: 0;
  background: linear-gradient(#a8abb2, #a8abb2) center / 5px 9px no-repeat;
  clip-path: polygon(4px 2px, 9px 6px, 9px 7px, 4px 11px);
}
.tree label { display: flex; align-items: center; line-height: 24px; }
.tree input { appearance: none; width: 13px; height: 13px; margin: 0 8px 0 0; border: 1px solid #dcdfe6; border-radius: 2px; background: #fff; }

.actions { display: flex; gap: 11px; }
.btn { width: 60px; height: 30px; padding: 0; border: 1px solid #dcdfe6; border-radius: 2px; background: #fff; color: #606266; font: 13px/28px "Noto Sans CJK SC", sans-serif; }
.primary { background: #1890ff; border-color: #1890ff; color: #fff; }

.footer {
  display: flex;
  justify-content: center;
  align-items: center;
  margin-top: 18px;
  padding: 11px 0 19px;
  border-top: 1px dashed #dcdfe6;
  color: #909399;
  font: 13px/20px "Liberation Sans", "Noto Sans CJK SC", sans-serif;
}
.footer svg { width: 14px; margin: 0 9px; fill: none; stroke: #909399; stroke-width: 1.2; }
.backtop {
  position: fixed;
  right: 36px;
  bottom: 32px;
  display: flex;
  align-items: center;
  justify-content: center;
  width: 38px;
  height: 38px;
  padding: 0;
  border: 0;
  border-radius: 50%;
  background: #fff;
  box-shadow: 0 0 6px rgba(0, 0, 0, .12);
}
.backtop svg { width: 12px; fill: #1890ff; }
.rail-thumbs { position: absolute; top: 0; right: 0; width: 6px; height: 100%; fill: #e9e9eb; }
```
